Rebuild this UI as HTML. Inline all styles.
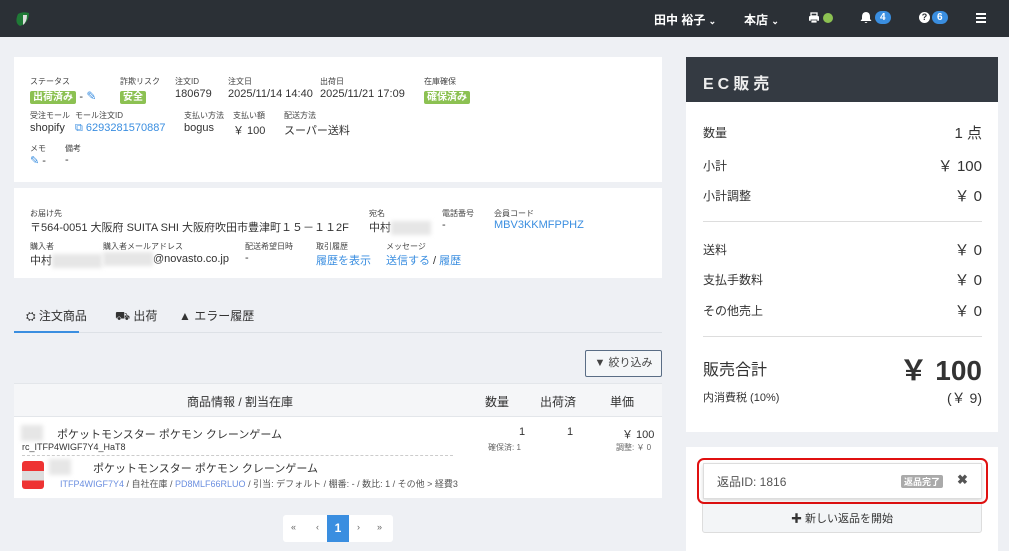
<!DOCTYPE html>
<html><head><meta charset="utf-8"><style>
*{box-sizing:border-box;margin:0;padding:0}
body{width:1009px;height:551px;overflow:hidden;background:#eef0f4;font-family:"Liberation Sans","Noto Sans CJK JP",sans-serif;color:#333;position:relative;font-size:12px}
.a{position:absolute;white-space:nowrap}
.top{position:absolute;left:0;top:0;width:1009px;height:37px;background:#2b3036}
.w{color:#fff;font-weight:bold;font-size:12px}
.card{position:absolute;background:#fff}
.lb{font-size:8px;color:#444}
.v{font-size:11px;color:#333}
.lk{color:#3a8ee0}
.bg{background:#8cc152;color:#fff;font-size:10px;font-weight:bold;padding:1px 3px;border-radius:2px}
.badge{background:#3a8ee0;color:#fff;border-radius:8px;font-size:10px;padding:1px 5px;font-weight:bold}
.blur{background:#e6e6e6;filter:blur(2px);height:14px;display:inline-block;vertical-align:middle}
.rr{font-size:12px;color:#333}
</style></head><body>
<div class="top"></div>
<svg class="a" style="left:14px;top:11px" width="16" height="16" viewBox="0 0 16 16"><path d="M4 3 Q9 0 15 2 Q15 12 6 15 Q0 12 4 3Z" fill="#1f7a36"/><path d="M9 4 L13 4 Q13 11 9 14 Z" fill="#ddd"/></svg>
<div class="a w" style="left:654px;top:11px">田中 裕子 <span style="font-size:9px">⌄</span></div>
<div class="a w" style="left:744px;top:11px">本店 <span style="font-size:9px">⌄</span></div>
<svg class="a" style="left:808px;top:12px" width="12" height="12" viewBox="0 0 12 12"><rect x="3" y="1" width="6" height="3" fill="none" stroke="#fff" stroke-width="1.3"/><rect x="1" y="4" width="10" height="5" rx="1" fill="#fff"/><rect x="3" y="8" width="6" height="3" fill="#fff" stroke="#2b3036" stroke-width=".8"/></svg>
<div class="a" style="left:823px;top:13px;width:10px;height:10px;border-radius:5px;background:#8cc152"></div>
<svg class="a" style="left:860px;top:11px" width="12" height="13" viewBox="0 0 12 13"><path d="M6 1 Q2 1 2 6 L2 8 L0.5 10 L11.5 10 L10 8 L10 6 Q10 1 6 1Z M4.5 11 Q6 13 7.5 11Z" fill="#fff"/></svg>
<div class="a badge" style="left:875px;top:11px">4</div>
<div class="a" style="left:919px;top:12px;width:11px;height:11px;border-radius:6px;background:#fff;color:#2b3036;font-size:9px;font-weight:bold;text-align:center;line-height:11px">?</div><div class="a badge" style="left:932px;top:11px">6</div>
<div class="a" style="left:976px;top:13px;width:10px;height:2px;background:#fff;box-shadow:0 4px #fff,0 8px #fff"></div>

<div class="card" style="left:14px;top:57px;width:648px;height:125px"></div>
<div class="a lb" style="left:30px;top:76px">ステータス</div>
<div class="a" style="left:30px;top:88px"><span class="bg">出荷済み</span> <span class="v">-</span> <span class="lk">✎</span></div>
<div class="a lb" style="left:120px;top:76px">詐欺リスク</div><div class="a" style="left:120px;top:88px"><span class="bg">安全</span></div>
<div class="a lb" style="left:175px;top:76px">注文ID</div><div class="a v" style="left:175px;top:88px">180679</div>
<div class="a lb" style="left:228px;top:76px">注文日</div><div class="a v" style="left:228px;top:88px">2025/11/14 14:40</div>
<div class="a lb" style="left:320px;top:76px">出荷日</div><div class="a v" style="left:320px;top:88px">2025/11/21 17:09</div>
<div class="a lb" style="left:424px;top:76px">在庫確保</div><div class="a" style="left:424px;top:88px"><span class="bg">確保済み</span></div>
<div class="a lb" style="left:30px;top:110px">受注モール</div><div class="a v" style="left:30px;top:122px">shopify</div>
<div class="a lb" style="left:75px;top:110px">モール注文ID</div><div class="a v lk" style="left:75px;top:122px">⧉ 6293281570887</div>
<div class="a lb" style="left:184px;top:110px">支払い方法</div><div class="a v" style="left:184px;top:122px">bogus</div>
<div class="a lb" style="left:233px;top:110px">支払い額</div><div class="a v" style="left:233px;top:122px">￥ 100</div>
<div class="a lb" style="left:284px;top:110px">配送方法</div><div class="a v" style="left:284px;top:122px">スーパー送料</div>
<div class="a lb" style="left:30px;top:143px">メモ</div><div class="a v" style="left:30px;top:154px"><span class="lk">✎</span> -</div>
<div class="a lb" style="left:65px;top:143px">備考</div><div class="a v" style="left:65px;top:154px">-</div>

<div class="card" style="left:14px;top:188px;width:648px;height:90px"></div>
<div class="a lb" style="left:30px;top:208px">お届け先</div><div class="a v" style="left:30px;top:219px">〒564-0051 大阪府 SUITA SHI 大阪府吹田市豊津町１５－１１2F</div>
<div class="a lb" style="left:369px;top:208px">宛名</div><div class="a v" style="left:369px;top:219px">中村<span class="blur" style="width:40px"></span></div>
<div class="a lb" style="left:442px;top:208px">電話番号</div><div class="a v" style="left:442px;top:219px">-</div>
<div class="a lb" style="left:494px;top:208px">会員コード</div><div class="a v lk" style="left:494px;top:219px">MBV3KKMFPPHZ</div>
<div class="a lb" style="left:30px;top:241px">購入者</div><div class="a v" style="left:30px;top:252px">中村<span class="blur" style="width:50px"></span></div>
<div class="a lb" style="left:103px;top:241px">購入者メールアドレス</div><div class="a v" style="left:103px;top:252px"><span class="blur" style="width:50px"></span>@novasto.co.jp</div>
<div class="a lb" style="left:245px;top:241px">配送希望日時</div><div class="a v" style="left:245px;top:252px">-</div>
<div class="a lb" style="left:316px;top:241px">取引履歴</div><div class="a v lk" style="left:316px;top:252px">履歴を表示</div>
<div class="a lb" style="left:386px;top:241px">メッセージ</div><div class="a v" style="left:386px;top:252px"><span class="lk">送信する</span> / <span class="lk">履歴</span></div>

<div class="a" style="left:14px;top:332px;width:648px;height:1px;background:#dde1e6"></div>
<div class="a" style="left:14px;top:331px;width:65px;height:2px;background:#3a8ee0"></div>
<div class="a" style="left:26px;top:307px;font-size:12px;color:#333">⛭ 注文商品</div>
<div class="a" style="left:115px;top:307px;font-size:12px;color:#333">⛟ 出荷</div>
<div class="a" style="left:179px;top:307px;font-size:12px;color:#333">▲ エラー履歴</div>
<div class="a" style="left:585px;top:350px;width:77px;height:27px;border:1px solid #5a6d85;border-radius:2px;background:#f4f6f8;font-size:11px;text-align:center;line-height:25px;color:#444">▼ 絞り込み</div>

<div class="a" style="left:14px;top:383px;width:648px;height:34px;background:#f5f6f8;border-top:1px solid #e3e6ea;border-bottom:1px solid #e3e6ea"></div>
<div class="a" style="left:187px;top:393px;font-size:12px">商品情報 / 割当在庫</div>
<div class="a" style="left:485px;top:393px;font-size:12px">数量</div>
<div class="a" style="left:540px;top:393px;font-size:12px">出荷済</div>
<div class="a" style="left:610px;top:393px;font-size:12px">単価</div>
<div class="card" style="left:14px;top:417px;width:648px;height:81px"></div>
<div class="a" style="left:21px;top:425px"><span class="blur" style="width:22px;height:16px"></span></div>
<div class="a" style="left:57px;top:426px;font-size:11px">ポケットモンスター ポケモン クレーンゲーム</div>
<div class="a" style="left:22px;top:442px;font-size:9px">rc_ITFP4WIGF7Y4_HaT8</div>
<div class="a" style="left:519px;top:426px;font-size:11px">1</div><div class="a" style="left:567px;top:426px;font-size:11px">1</div><div class="a" style="left:622px;top:426px;font-size:11px">￥ 100</div>
<div class="a" style="left:488px;top:442px;font-size:8px;color:#666">確保済: 1</div><div class="a" style="left:616px;top:442px;font-size:8px;color:#666">調整: ￥ 0</div>
<div class="a" style="left:22px;top:455px;width:431px;border-top:1px dashed #ccc"></div>
<div class="a" style="left:22px;top:461px;width:22px;height:28px;background:linear-gradient(#e33 0 35%,#ddd 35% 70%,#e33 70%);border-radius:3px"></div>
<div class="a" style="left:49px;top:459px"><span class="blur" style="width:22px;height:16px"></span></div>
<div class="a" style="left:93px;top:460px;font-size:11px">ポケットモンスター ポケモン クレーンゲーム</div>
<div class="a" style="left:60px;top:477px;font-size:9px;color:#555"><span style="color:#6b8fe0">ITFP4WIGF7Y4</span> / 自社在庫 / <span style="color:#6b8fe0">PD8MLF66RLUO</span> / 引当: デフォルト / 棚番: - / 数比: 1 / その他 &gt; 経費3</div>

<div class="a" style="left:283px;top:515px;width:110px;height:27px;background:#fff;border-radius:3px"></div>
<div class="a" style="left:291px;top:522px;font-size:9px;color:#666">«</div><div class="a" style="left:316px;top:522px;font-size:9px;color:#666">‹</div>
<div class="a" style="left:327px;top:515px;width:22px;height:27px;background:#3a8ee0;color:#fff;font-weight:bold;text-align:center;line-height:27px">1</div>
<div class="a" style="left:357px;top:522px;font-size:9px;color:#666">›</div><div class="a" style="left:377px;top:522px;font-size:9px;color:#666">»</div>

<div class="card" style="left:686px;top:57px;width:312px;height:375px"></div>
<div class="a" style="left:686px;top:57px;width:312px;height:45px;background:#343a42;color:#eee;font-size:16px;font-weight:bold;letter-spacing:4px;padding:13px 0 0 17px">EC販売</div>
<div class="a rr" style="left:703px;top:124px">数量</div><div class="a" style="right:27px;top:122px;font-size:15px">1 点</div>
<div class="a rr" style="left:703px;top:157px">小計</div><div class="a" style="right:27px;top:155px;font-size:15px">￥ 100</div>
<div class="a rr" style="left:703px;top:187px">小計調整</div><div class="a" style="right:27px;top:185px;font-size:15px">￥ 0</div>
<div class="a" style="left:703px;top:221px;width:279px;height:1px;background:#ddd"></div>
<div class="a rr" style="left:703px;top:241px">送料</div><div class="a" style="right:27px;top:239px;font-size:15px">￥ 0</div>
<div class="a rr" style="left:703px;top:271px">支払手数料</div><div class="a" style="right:27px;top:269px;font-size:15px">￥ 0</div>
<div class="a rr" style="left:703px;top:302px">その他売上</div><div class="a" style="right:27px;top:300px;font-size:15px">￥ 0</div>
<div class="a" style="left:703px;top:336px;width:279px;height:1px;background:#ddd"></div>
<div class="a" style="left:703px;top:356px;font-size:16px">販売合計</div><div class="a" style="right:27px;top:349px;font-size:28px;font-weight:bold;color:#333">￥ 100</div>
<div class="a rr" style="left:703px;top:389px;font-size:11px">内消費税 (10%)</div><div class="a" style="right:27px;top:388px;font-size:14px">(￥ 9)</div>

<div class="card" style="left:686px;top:447px;width:312px;height:104px"></div>
<div class="a" style="left:702px;top:497px;width:280px;height:36px;background:#f3f5f7;border:1px solid #ddd;border-radius:3px;font-size:11px;text-align:center;padding-top:12px">✚ 新しい返品を開始</div>
<div class="a" style="left:697px;top:458px;width:291px;height:46px;border:2px solid #e01010;border-radius:7px;background:#fff"></div>
<div class="a" style="left:703px;top:463px;width:279px;height:36px;border:1px solid #ddd;box-shadow:0 2px 4px rgba(0,0,0,.15)"></div>
<div class="a" style="left:717px;top:473px;font-size:12px;color:#555">返品ID: 1816</div>
<div class="a" style="left:901px;top:475px;background:#aaa;color:#fff;font-size:9px;font-weight:bold;padding:0 3px;border-radius:2px">返品完了</div>
<div class="a" style="left:957px;top:472px;font-size:13px;font-weight:bold;color:#555">✖</div>
</body></html>
